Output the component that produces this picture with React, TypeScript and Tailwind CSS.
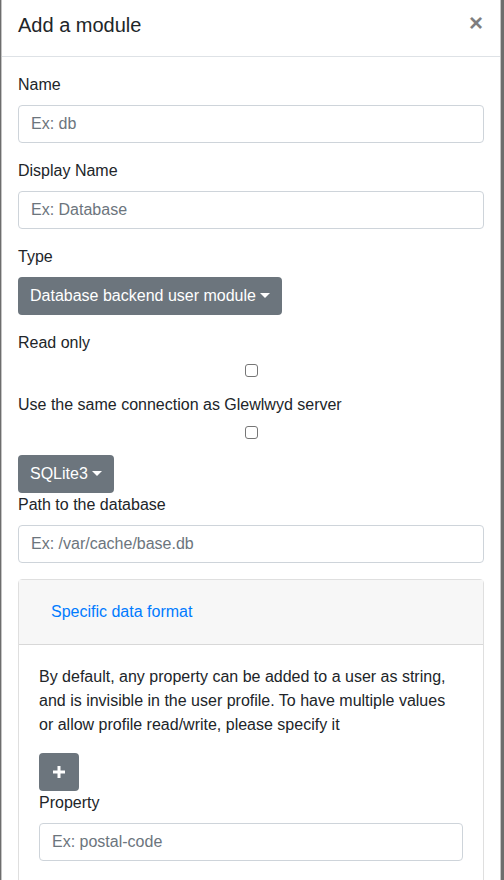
import React from 'react'

const font = { fontFamily: '"Liberation Sans", Arial, sans-serif' }

function Field({ label, placeholder }: { label: string; placeholder: string }) {
  return (
    <div className="mb-4">
      <label className="mb-2 block leading-6">{label}</label>
      <input
        type="text"
        placeholder={placeholder}
        className="block h-[38px] w-full rounded border border-[#ced4da] bg-white px-3 text-base text-[#495057] placeholder:text-[#6c757d] focus:outline-none"
      />
    </div>
  )
}

function Caret() {
  return (
    <span className="ml-[4px] inline-block h-0 w-0 border-x-[5px] border-t-[5px] border-x-transparent border-t-white align-[3px]" />
  )
}

function CheckField({ label }: { label: string }) {
  return (
    <div className="mb-4">
      <label className="mb-2 block leading-6">{label}</label>
      <div className="flex h-[14px] items-center justify-center">
        <span className="block h-[13px] w-[13px] rounded-[3px] border border-[#767676] bg-white" />
      </div>
    </div>
  )
}

export default function App() {
  return (
    <div className="flex h-[880px] overflow-hidden bg-[#6d6d6d] pl-[1px] pr-[3px]" style={font}>
      <div className="flex-1 border-x border-[#c4c4c4] bg-white text-base text-[#212529]">
        <div className="flex items-start justify-between border-b border-[#dee2e6] pl-[16px] pr-[17px] pt-[10px] pb-[16px]">
          <h5 className="text-xl leading-[30px]">Add a module</h5>
          <button className="mt-[1px] text-2xl font-bold leading-6 text-black opacity-50">×</button>
        </div>
        <div className="p-4">
          <Field label="Name" placeholder="Ex: db" />
          <Field label="Display Name" placeholder="Ex: Database" />
          <div className="mb-4">
            <label className="mb-2 block leading-6">Type</label>
            <button className="h-[38px] rounded bg-[#6c757d] px-3 text-white">
              Database backend user module
              <Caret />
            </button>
          </div>
          <CheckField label="Read only" />
          <CheckField label="Use the same connection as Glewlwyd server" />
          <button className="h-[38px] rounded bg-[#6c757d] px-3 text-white">
            SQLite3
            <Caret />
          </button>
          <Field label="Path to the database" placeholder="Ex: /var/cache/base.db" />
          <div className="rounded border border-[rgba(0,0,0,0.125)]">
            <div className="border-b border-[rgba(0,0,0,0.125)] bg-[#f7f7f7] px-5 py-[13px]">
              <button className="h-[38px] px-3 text-[#007bff]">Specific data format</button>
            </div>
            <div className="p-5">
              <p className="mb-4 leading-6">
                By default, any property can be added to a user as string, and is invisible in the user profile. To have multiple values or allow profile read/write, please specify it
              </p>
              <button className="flex h-[38px] w-10 items-center justify-center rounded bg-[#6c757d]">
                <svg width="14" height="14" viewBox="0 0 14 14">
                  <path d="M7 1v12M1 7h12" stroke="white" strokeWidth="3" />
                </svg>
              </button>
              <Field label="Property" placeholder="Ex: postal-code" />
            </div>
          </div>
        </div>
      </div>
    </div>
  )
}
